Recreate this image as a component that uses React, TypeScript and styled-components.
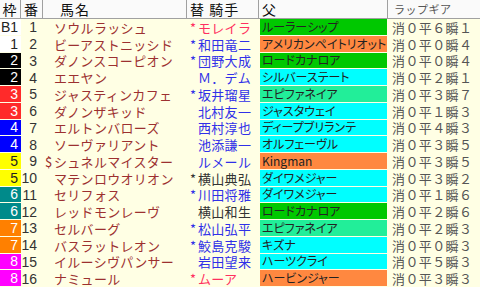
import React from "react";
import styled, { createGlobalStyle } from "styled-components";

const Global = createGlobalStyle`
  html, body { margin: 0; padding: 0; background: #ffffe4; }
  body { font-family: "Noto Sans CJK JP", "Liberation Sans", sans-serif; }
`;

const COLS = "21px 22px 144px 72px 129px 92px";

const Table = styled.div`
  width: 480px;
  height: 287px;
  display: flex;
  flex-direction: column;
  background: #ffffe4;
  overflow: hidden;
`;

const HeaderRow = styled.div`
  display: grid;
  grid-template-columns: ${COLS};
  height: 19px;
  flex: none;
  background: #fafafa;
  border-bottom: 1px solid #a0a0a0;
  box-sizing: border-box;
`;

const HeadCell = styled.div<{ $align?: string; $pad?: number; $small?: boolean; $last?: boolean }>`
  display: flex;
  align-items: center;
  justify-content: ${(p) => p.$align || "flex-start"};
  padding-left: ${(p) => p.$pad ?? 0}px;
  border-right: ${(p) => (p.$last ? "none" : "1px solid #a0a0a0")};
  font-size: ${(p) => (p.$small ? "11px" : "14px")};
  color: ${(p) => (p.$small ? "#555" : "#111")};
  letter-spacing: ${(p) => (p.$small ? "0.5px" : "1px")};
  line-height: 1;
  white-space: pre;
`;

const Row = styled.div`
  display: grid;
  grid-template-columns: ${COLS};
  flex: 1;
  min-height: 0;
  line-height: 1;
`;

const Frame = styled.div<{ $bg: string; $fg: string }>`
  background: ${(p) => p.$bg};
  color: ${(p) => p.$fg};
  margin-bottom: 1px;
  display: flex;
  align-items: center;
  justify-content: flex-end;
  padding-right: 3px;
  font-family: "Liberation Sans", sans-serif;
  font-size: 14px;
`;

const Num = styled.div`
  display: flex;
  align-items: center;
  justify-content: flex-end;
  padding-right: 6px;
  font-family: "Liberation Sans", sans-serif;
  font-size: 14px;
  color: #333;
`;

const Name = styled.div`
  display: flex;
  align-items: center;
  padding-left: 2px;
  color: #9c3030;
  font-size: 13px;
  letter-spacing: 0.3px;
  white-space: nowrap;
  overflow: hidden;
`;

const Prefix = styled.span<{ $w: number }>`
  display: inline-block;
  width: ${(p) => p.$w}px;
  flex: none;
  letter-spacing: 0;
`;

const Jockey = styled.div<{ $c: string }>`
  display: flex;
  align-items: center;
  padding-left: 3px;
  color: ${(p) => p.$c};
  font-size: 13px;
  letter-spacing: 0.3px;
  white-space: nowrap;
  overflow: hidden;
`;

const Sire = styled.div<{ $bg: string }>`
  background: ${(p) => p.$bg};
  margin: 0 1px 1px 1px;
  display: flex;
  align-items: center;
  padding-left: 2px;
  color: #222;
  font-size: 12px;
  font-feature-settings: "palt";
  white-space: nowrap;
  overflow: hidden;
`;

const Lap = styled.div`
  display: flex;
  align-items: center;
  padding-left: 4px;
  color: #555;
  font-size: 13px;
  letter-spacing: 0.4px;
  white-space: nowrap;
`;

const FRAME: Record<string, [string, string]> = {
  B1: ["#ffffff", "#222"],
  "1": ["#ffffff", "#222"],
  "2": ["#000000", "#fff"],
  "3": ["#ff2a2a", "#fff"],
  "4": ["#0000ff", "#fff"],
  "5": ["#ffff00", "#222"],
  "6": ["#008a8a", "#fff"],
  "7": ["#ff8000", "#fff"],
  "8": ["#ff00ff", "#fff"],
};

const GREEN = "#00c800";
const ORANGE = "#ff8840";
const CYAN = "#00ffff";
const SPRING = "#22ee99";
const BLUE = "#3030e8";
const RED = "#ff3060";
const DARK = "#333";

type R = {
  f: string; n: number; pre?: string; name: string; jp?: string; jockey: string; jc: string;
  sire: string; sc: string; lap: string;
};

const rows: R[] = [
  { f: "B1", n: 1, name: "ソウルラッシュ", jp: "*", jockey: "モレイラ", jc: RED, sire: "ルーラーシップ", sc: GREEN, lap: "消０平６瞬１" },
  { f: "1", n: 2, name: "ビーアストニッシド", jp: "*", jockey: "和田竜二", jc: BLUE, sire: "アメリカンペイトリオット", sc: ORANGE, lap: "消０平０瞬４" },
  { f: "2", n: 3, name: "ダノンスコーピオン", jp: "*", jockey: "団野大成", jc: BLUE, sire: "ロードカナロア", sc: GREEN, lap: "消０平０瞬４" },
  { f: "2", n: 4, name: "エエヤン", jockey: "Ｍ．デム", jc: BLUE, sire: "シルバーステート", sc: CYAN, lap: "消０平２瞬１" },
  { f: "3", n: 5, name: "ジャスティンカフェ", jp: "*", jockey: "坂井瑠星", jc: BLUE, sire: "エピファネイア", sc: SPRING, lap: "消０平３瞬７" },
  { f: "3", n: 6, name: "ダノンザキッド", jockey: "北村友一", jc: BLUE, sire: "ジャスタウェイ", sc: CYAN, lap: "消０平１瞬３" },
  { f: "4", n: 7, name: "エルトンバローズ", jockey: "西村淳也", jc: BLUE, sire: "ディープブリランテ", sc: CYAN, lap: "消０平４瞬３" },
  { f: "4", n: 8, name: "ソーヴァリアント", jockey: "池添謙一", jc: BLUE, sire: "オルフェーヴル", sc: CYAN, lap: "消０平３瞬５" },
  { f: "5", n: 9, pre: "$", name: "シュネルマイスター", jockey: "ルメール", jc: BLUE, sire: "Kingman", sc: ORANGE, lap: "消０平３瞬５" },
  { f: "5", n: 10, name: "マテンロウオリオン", jp: "*", jockey: "横山典弘", jc: DARK, sire: "ダイワメジャー", sc: CYAN, lap: "消０平３瞬２" },
  { f: "6", n: 11, name: "セリフォス", jp: "*", jockey: "川田将雅", jc: BLUE, sire: "ダイワメジャー", sc: CYAN, lap: "消０平１瞬６" },
  { f: "6", n: 12, name: "レッドモンレーヴ", jockey: "横山和生", jc: DARK, sire: "ロードカナロア", sc: GREEN, lap: "消０平２瞬６" },
  { f: "7", n: 13, name: "セルバーグ", jp: "*", jockey: "松山弘平", jc: BLUE, sire: "エピファネイア", sc: SPRING, lap: "消０平２瞬３" },
  { f: "7", n: 14, name: "バスラットレオン", jp: "*", jockey: "鮫島克駿", jc: BLUE, sire: "キズナ", sc: CYAN, lap: "消０平０瞬３" },
  { f: "8", n: 15, name: "イルーシヴパンサー", jockey: "岩田望来", jc: BLUE, sire: "ハーツクライ", sc: CYAN, lap: "消０平５瞬３" },
  { f: "8", n: 16, name: "ナミュール", jp: "*", jockey: "ムーア", jc: RED, sire: "ハービンジャー", sc: ORANGE, lap: "消０平３瞬３" },
];

export default function App() {
  return (
    <>
      <Global />
      <Table>
        <HeaderRow>
          <HeadCell $align="center">枠</HeadCell>
          <HeadCell $align="center">番</HeadCell>
          <HeadCell $pad={17}>馬名</HeadCell>
          <HeadCell $pad={3}>替 騎手</HeadCell>
          <HeadCell $pad={3}>父</HeadCell>
          <HeadCell $pad={6} $small $last>ラップギア</HeadCell>
        </HeaderRow>
        {rows.map((r) => {
          const [bg, fg] = FRAME[r.f];
          return (
            <Row key={r.n}>
              <Frame $bg={bg} $fg={fg}>{r.f}</Frame>
              <Num>{r.n}</Num>
              <Name>
                <Prefix $w={9}>{r.pre ?? ""}</Prefix>
                {r.name}
              </Name>
              <Jockey $c={r.jc}>
                <Prefix $w={8}>{r.jp ?? ""}</Prefix>
                {r.jockey}
              </Jockey>
              <Sire $bg={r.sc}>{r.sire}</Sire>
              <Lap>{r.lap}</Lap>
            </Row>
          );
        })}
      </Table>
    </>
  );
}
